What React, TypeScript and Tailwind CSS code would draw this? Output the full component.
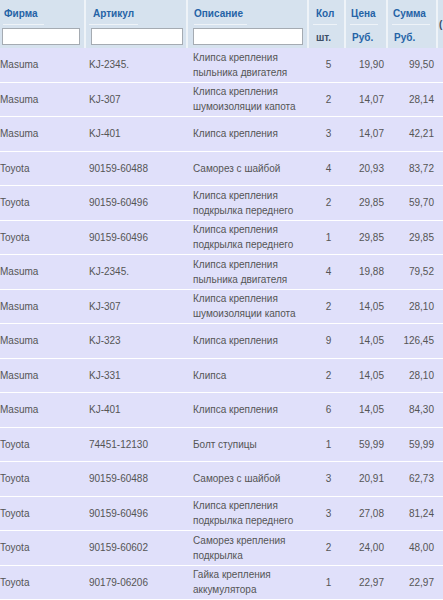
import React from "react";

type Row = {
  firm: string;
  art: string;
  desc: string[];
  qty: string;
  price: string;
  sum: string;
};

const rows: Row[] = [
  { firm: "Masuma", art: "KJ-2345.", desc: ["Клипса крепления", "пыльника двигателя"], qty: "5", price: "19,90", sum: "99,50" },
  { firm: "Masuma", art: "KJ-307", desc: ["Клипса крепления", "шумоизоляции капота"], qty: "2", price: "14,07", sum: "28,14" },
  { firm: "Masuma", art: "KJ-401", desc: ["Клипса крепления"], qty: "3", price: "14,07", sum: "42,21" },
  { firm: "Toyota", art: "90159-60488", desc: ["Саморез с шайбой"], qty: "4", price: "20,93", sum: "83,72" },
  { firm: "Toyota", art: "90159-60496", desc: ["Клипса крепления", "подкрылка переднего"], qty: "2", price: "29,85", sum: "59,70" },
  { firm: "Toyota", art: "90159-60496", desc: ["Клипса крепления", "подкрылка переднего"], qty: "1", price: "29,85", sum: "29,85" },
  { firm: "Masuma", art: "KJ-2345.", desc: ["Клипса крепления", "пыльника двигателя"], qty: "4", price: "19,88", sum: "79,52" },
  { firm: "Masuma", art: "KJ-307", desc: ["Клипса крепления", "шумоизоляции капота"], qty: "2", price: "14,05", sum: "28,10" },
  { firm: "Masuma", art: "KJ-323", desc: ["Клипса крепления"], qty: "9", price: "14,05", sum: "126,45" },
  { firm: "Masuma", art: "KJ-331", desc: ["Клипса"], qty: "2", price: "14,05", sum: "28,10" },
  { firm: "Masuma", art: "KJ-401", desc: ["Клипса крепления"], qty: "6", price: "14,05", sum: "84,30" },
  { firm: "Toyota", art: "74451-12130", desc: ["Болт ступицы"], qty: "1", price: "59,99", sum: "59,99" },
  { firm: "Toyota", art: "90159-60488", desc: ["Саморез с шайбой"], qty: "3", price: "20,91", sum: "62,73" },
  { firm: "Toyota", art: "90159-60496", desc: ["Клипса крепления", "подкрылка переднего"], qty: "3", price: "27,08", sum: "81,24" },
  { firm: "Toyota", art: "90159-60602", desc: ["Саморез крепления", "подкрылка"], qty: "2", price: "24,00", sum: "48,00" },
  { firm: "Toyota", art: "90179-06206", desc: ["Гайка крепления", "аккумулятора"], qty: "1", price: "22,97", sum: "22,97" },
];

const cols = "grid grid-cols-[86px_102px_121px_37px_42px_50px_5px]";

function Label({ children, cls }: { children: React.ReactNode; cls?: string }) {
  return (
    <span className={"inline-block border-b border-[#eef3f8] pb-[3px] " + (cls ?? "")}>{children}</span>
  );
}

export default function App() {
  return (
    <div
      className="w-[443px] h-[600px] overflow-hidden bg-[#e0e0fa]"
      style={{ fontFamily: '"Liberation Sans", Arial, sans-serif' }}
    >
      {/* header */}
      <div className={cols + " h-[48px] bg-[#d6e2ee] text-[10px] font-bold text-[#2563a6]"}>
        <div className="border-r-2 border-[#eef3f8] flex flex-col pt-[6px]">
          <div className="pl-[3px]">
            <Label cls="pl-px pr-[6px]">Фирма</Label>
          </div>
          <div className="pl-[2px] pt-[3px]">
            <div className="w-[78px] h-[17px] bg-white border border-[#a5abb2]" />
          </div>
        </div>
        <div className="border-r-2 border-[#eef3f8] flex flex-col pt-[6px]">
          <div className="pl-[3px]">
            <Label cls="px-[4px]">Артикул</Label>
          </div>
          <div className="pl-[5px] pt-[3px]">
            <div className="w-[92px] h-[17px] bg-white border border-[#a5abb2]" />
          </div>
        </div>
        <div className="border-r-2 border-[#eef3f8] flex flex-col pt-[6px]">
          <div className="pl-[6px]">
            <Label cls="pr-[4px]">Описание</Label>
          </div>
          <div className="pl-[5px] pt-[3px]">
            <div className="w-[110px] h-[17px] bg-white border border-[#a5abb2]" />
          </div>
        </div>
        <div className="border-r-2 border-[#eef3f8] flex flex-col pt-[6px]">
          <div className="pl-[4px]">
            <Label cls="px-[3px]">Кол</Label>
          </div>
          <div className="pl-[7px] pt-[5px] text-[#3d4f66]">шт.</div>
        </div>
        <div className="border-r-2 border-[#eef3f8] flex flex-col pt-[6px]">
          <div className="pl-[4px]">
            <Label cls="px-px pr-[2px]">Цена</Label>
          </div>
          <div className="pl-[6px] pt-[5px]">Руб.</div>
        </div>
        <div className="border-r-2 border-[#eef3f8] flex flex-col pt-[6px]">
          <div className="pl-[4px]">
            <Label cls="pl-px pr-[4px]">Сумма</Label>
          </div>
          <div className="pl-[6px] pt-[5px]">Руб.</div>
        </div>
        <div className="pt-[17px] pl-[1px] text-[#3d4f66]">(</div>
      </div>

      {/* rows */}
      {rows.map((r, i) => (
        <div
          key={i}
          className={cols + " h-[34.5px] border-b border-white text-[10px] leading-[15px] text-[#555555] items-center"}
        >
          <div className="pl-0 whitespace-nowrap">{r.firm}</div>
          <div className="pl-[3px] whitespace-nowrap">{r.art}</div>
          <div className="pl-[5px] whitespace-nowrap">
            {r.desc.map((d, j) => (
              <div key={j}>{d}</div>
            ))}
          </div>
          <div className="text-center pl-[2px]">{r.qty}</div>
          <div className="text-right pr-[4px]">{r.price}</div>
          <div className="text-right pr-[4px]">{r.sum}</div>
          <div />
        </div>
      ))}
    </div>
  );
}
